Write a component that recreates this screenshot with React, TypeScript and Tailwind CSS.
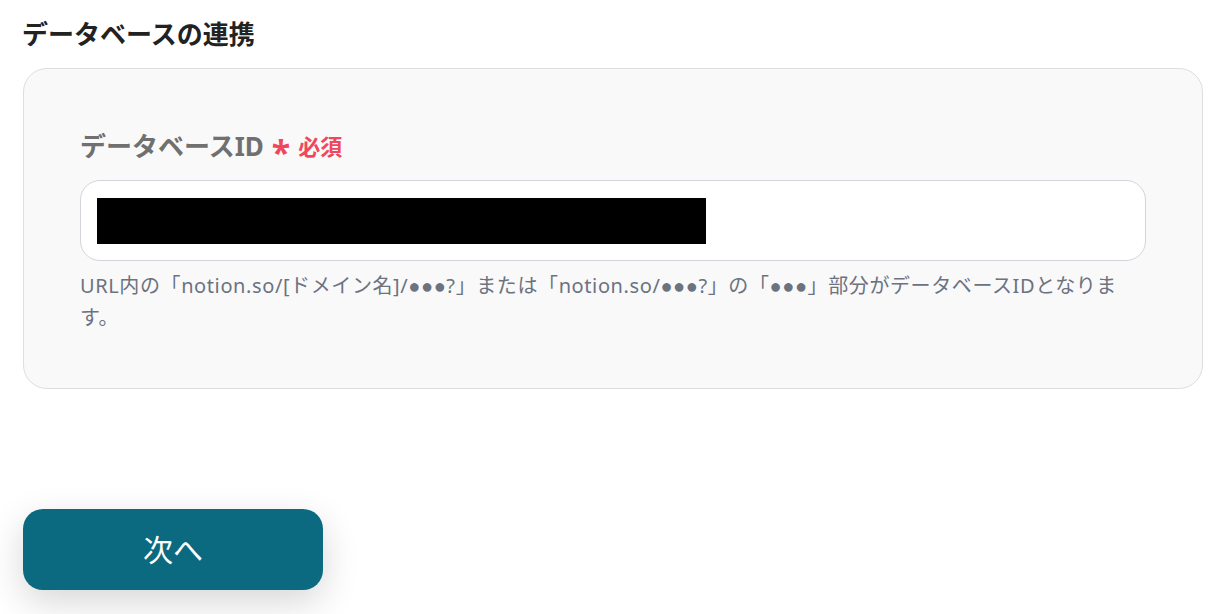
export default function App() {
    const font = { fontFamily: '"Noto Sans", "Liberation Sans", "Noto Sans CJK JP", sans-serif' };

    return (
        <div className="min-h-[614px] w-[1224px] bg-white" style={font}>
            <div className="px-[22px] pt-[16px]">
                <h2 className="text-[26px] font-bold leading-[36px] text-[#222222]">
                    データベースの連携
                </h2>
                <div className="mt-[16px] ml-px mr-[-1px] rounded-[24px] border border-[#dedede] bg-[#f9f9f9] px-[56px] pt-[59px] pb-[54px]">
                    <div className="flex h-[36px] items-center gap-[8px]">
                        <span className="text-[26px] font-bold leading-[36px] text-[#707070]">
                            データベースID
                        </span>
                        <span className="mt-[12px] text-[34px] font-bold leading-none text-[#f0475c]">*</span>
                        <span className="text-[22px] font-bold leading-[36px] text-[#f0475c]">必須</span>
                    </div>
                    <div className="mt-[16px] flex h-[81px] items-center rounded-[20px] border border-[#d1d5db] bg-white px-[16px]">
                        <div className="h-[46px] w-[609px] bg-black" />
                    </div>
                    <p className="mt-[9px] text-[20px] leading-[32px] tracking-[0.6px] text-[#6b7280]">
                        URL内の「notion.so/[ドメイン名]/●●●?」または「notion.so/●●●?」の「●●●」部分がデータベースIDとなります。
                    </p>
                </div>
                <button
                    type="button"
                    className="mt-[120px] ml-px flex h-[81px] w-[300px] items-center justify-center rounded-[20px] bg-[#0b6a80] text-[30px] text-white shadow-[0_12px_36px_rgba(0,0,0,0.16)]"
                >
                    次へ
                </button>
            </div>
        </div>
    );
}
